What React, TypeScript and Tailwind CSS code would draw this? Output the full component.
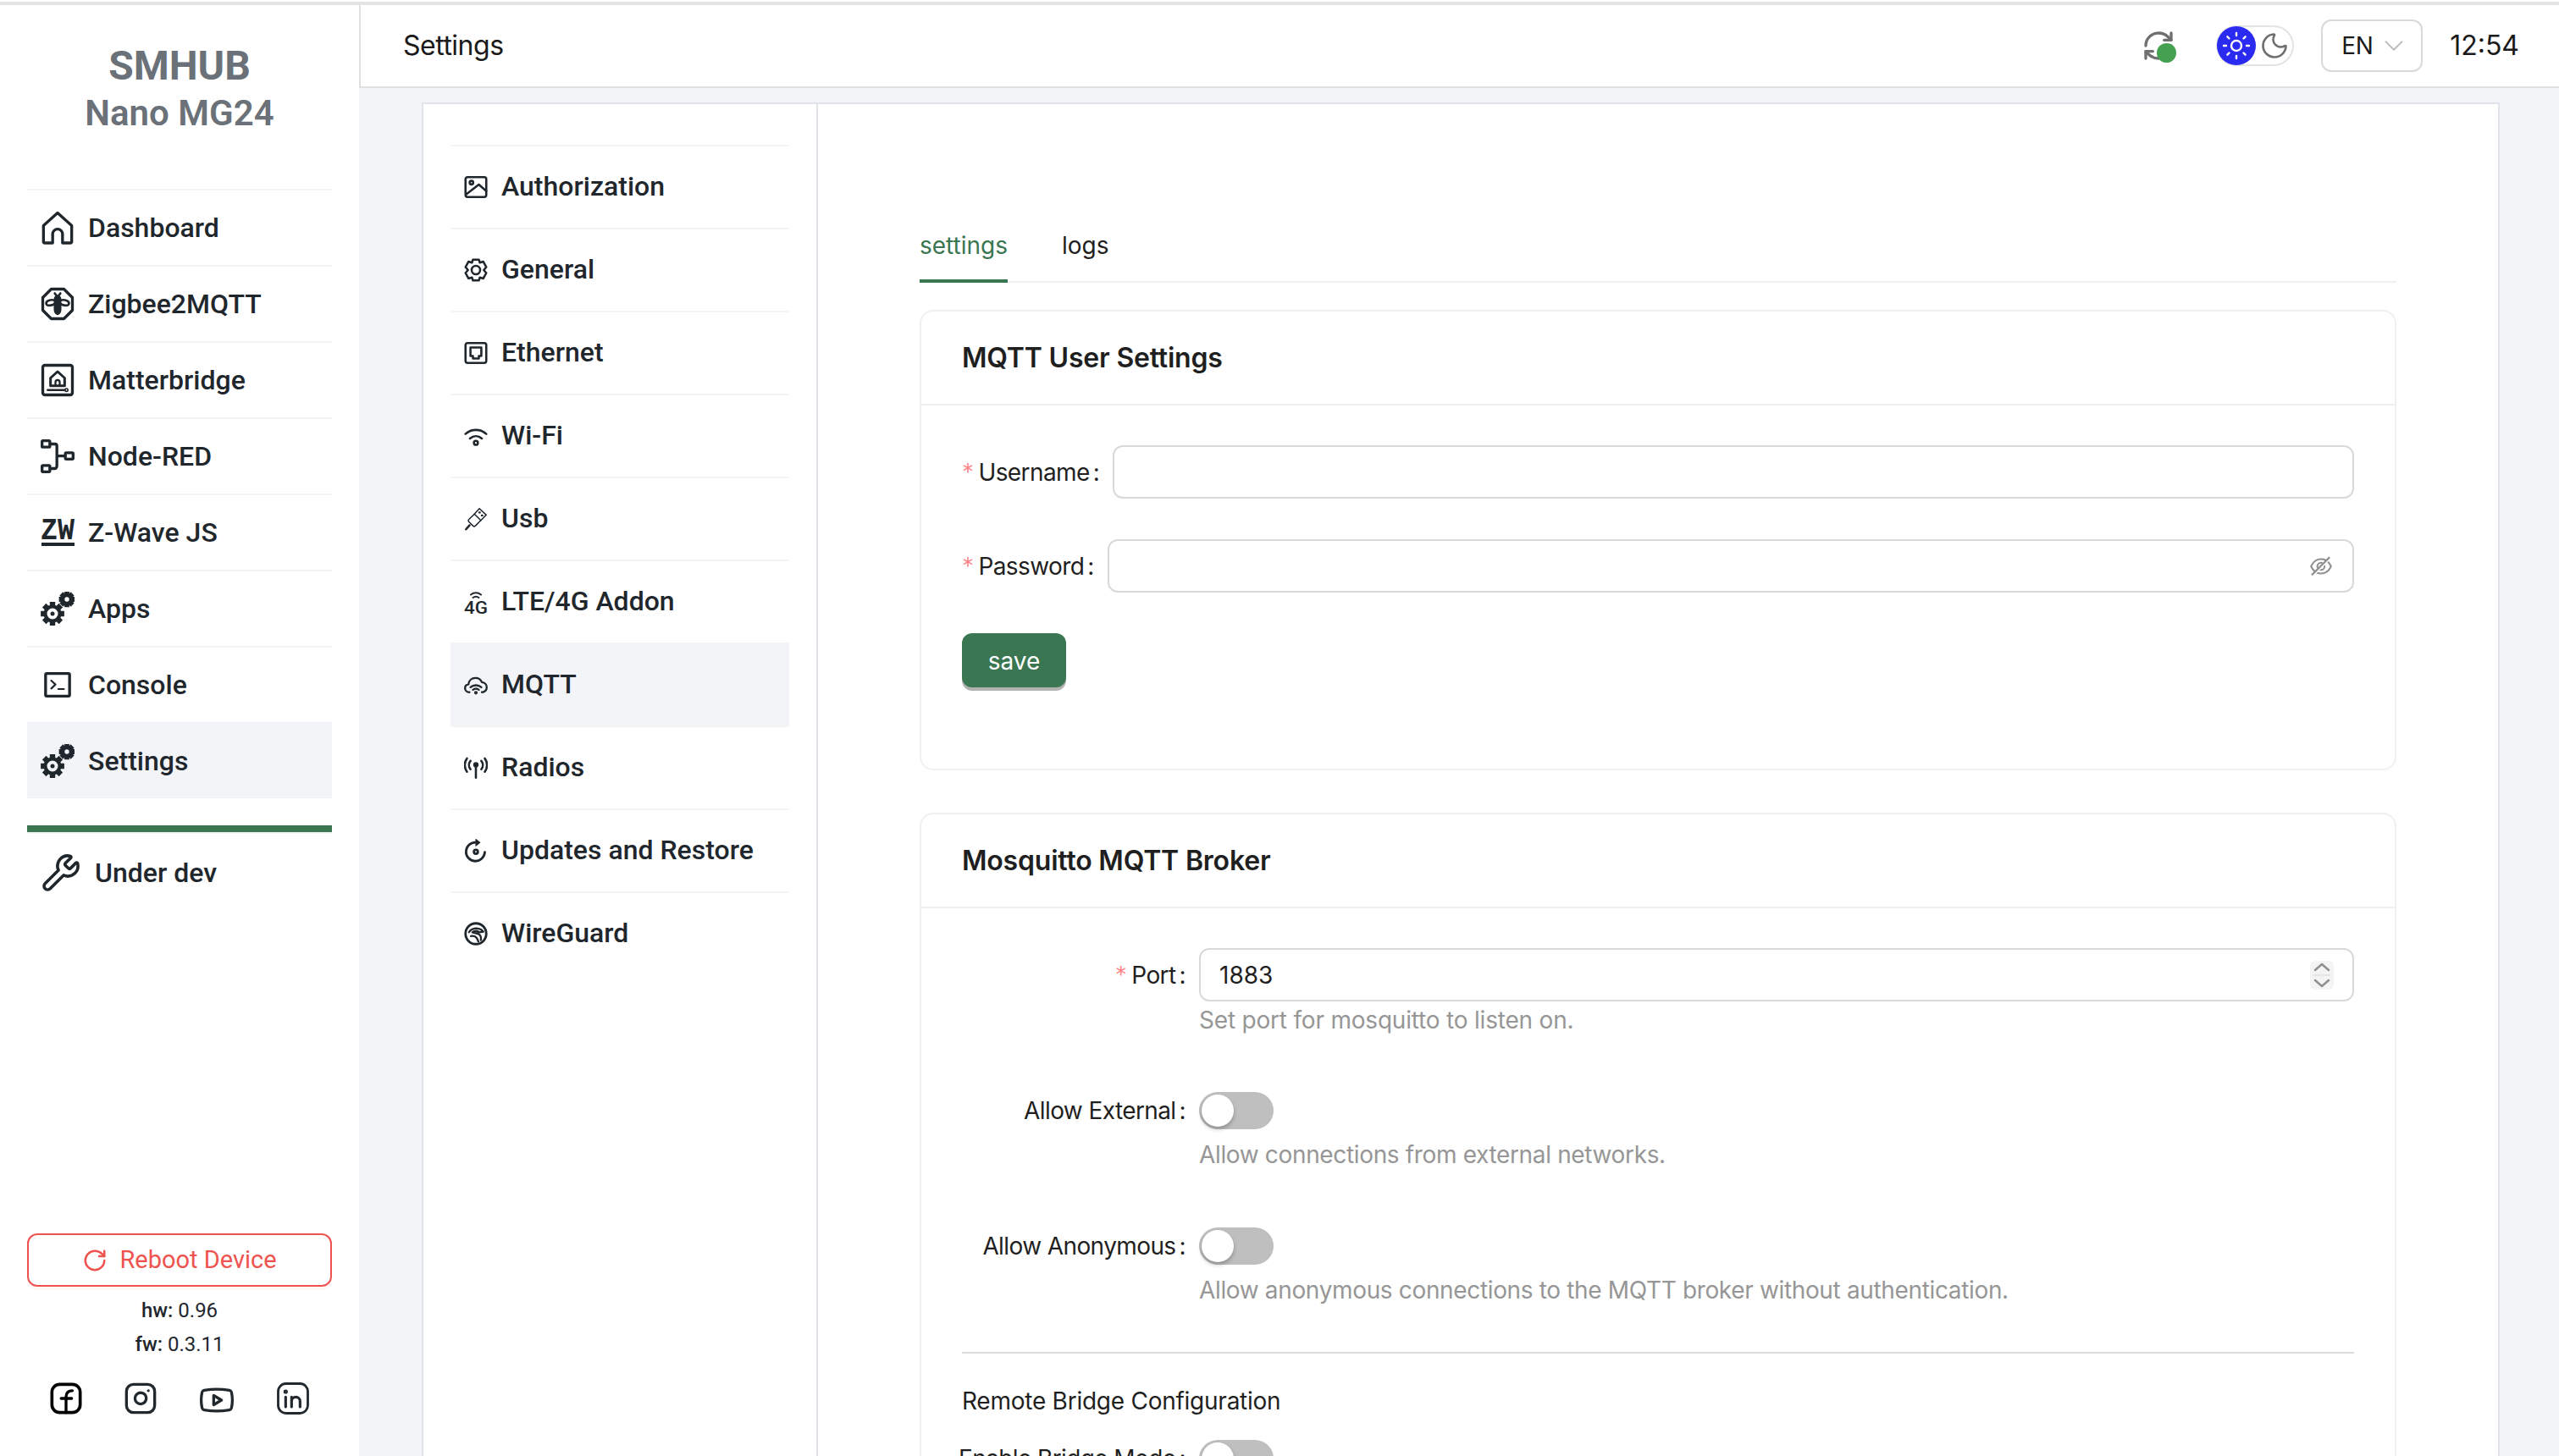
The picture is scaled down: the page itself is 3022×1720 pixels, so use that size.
import { ChevronDown, Instagram, Moon, RefreshCw, RotateCw, Sun, Wrench, Youtube } from 'lucide-react'
import { AiOutlineEyeInvisible } from 'react-icons/ai'
import type { ReactNode } from 'react'

const ROBOTO = 'font-[Roboto,sans-serif]'

type IconProps = { className?: string }

function Svg({ className, children, sw = 2 }: IconProps & { children: ReactNode; sw?: number }) {
  return (
    <svg viewBox="0 0 24 24" className={className} fill="none" stroke="currentColor" strokeWidth={sw} strokeLinecap="round" strokeLinejoin="round">
      {children}
    </svg>
  )
}

const HomeIcon = (p: IconProps) => (
  <Svg {...p}>
    <path d="M2 10.500 12 1.500l10 9V22a.8.8 0 0 1-.8.8h-5.700V16.500a3.500 3.500 0 0 0-7 0v6.300H2.800A.8.8 0 0 1 2 22Z" />
  </Svg>
)

const BeeIcon = (p: IconProps) => (
  <Svg {...p}>
    <path d="M7.500 1.500h9l6 6v9l-6 6h-9l-6-6v-9Z" />
    <path d="M12 6.500c-1.400 0-2.200 1-2.200 2.400v7.300c0 1.300 1 2.800 2.200 3.300 1.200-.5 2.200-2 2.200-3.300V8.900c0-1.400-.8-2.400-2.200-2.400Z" fill="currentColor" strokeWidth={1} />
    <path d="M10 9.500C7 8.500 3.500 10 4 12c.4 1.500 3.500 1.500 6 0M14 9.500c3-1 6.500.5 6 2.500-.4 1.500-3.500 1.500-6 0M10 4.500l1.500 2M14 4.500l-1.500 2" strokeWidth={1.600} />
  </Svg>
)

const MatterIcon = (p: IconProps) => (
  <Svg {...p}>
    <rect x="1.500" y="1.500" width="21" height="21" rx="1.500" />
    <path d="M7 10.500 12 6l5 4.500V16H7Z" strokeWidth={1.800} />
    <path d="M10.500 16v-2.500a1.500 1.500 0 0 1 3 0V16" strokeWidth={1.400} />
    <path d="M5 19h12" strokeWidth={1.500} />
    <circle cx="18.300" cy="19" r="1" strokeWidth={1} />
  </Svg>
)

const NodeRedIcon = (p: IconProps) => (
  <Svg {...p}>
    <rect x="1" y="1" width="5.500" height="4.500" rx=".6" />
    <rect x="1" y="18.500" width="5.500" height="4.500" rx=".6" />
    <rect x="17.500" y="9.500" width="5.500" height="4.500" rx=".6" />
    <path d="M6.500 3.300h3.700c.9 0 1.300.5 1.300 1.300v14c0 1-.5 2.100-1.300 2.100H6.500M11.500 11.800h6" strokeLinecap="butt" />
  </Svg>
)

const ZwIcon = ({ className }: IconProps) => (
  <svg viewBox="0 0 40 40" className={className} fill="currentColor" overflow="visible">
    <text x="0" y="28" fontFamily="Liberation Mono, monospace" fontWeight="700" fontSize="37" textLength="40" lengthAdjust="spacingAndGlyphs">ZW</text>
    <rect x="1" y="32" width="39" height="4" />
  </svg>
)

const Gear = ({ cx, cy, r, sw }: { cx: number; cy: number; r: number; sw: number }) => {
  const teeth = [0, 45, 90, 135, 180, 225, 270, 315]
  return (
    <g>
      <circle cx={cx} cy={cy} r={r} stroke="currentColor" strokeWidth={sw} fill="none" />
      {teeth.map(a => (
        <rect key={a} x={cx - sw * 0.8} y={cy - r - sw * 1.35} width={sw * 1.6} height={sw * 1.3} fill="currentColor" rx=".3" transform={`rotate(${a} ${cx} ${cy})`} />
      ))}
    </g>
  )
}

const GearsIcon = ({ className }: IconProps) => (
  <svg viewBox="0 0 40 40" className={className}>
    <Gear cx={14} cy={26} r={8.5} sw={4} />
    <circle cx={14} cy={26} r={2.5} fill="currentColor" />
    <Gear cx={31} cy={9} r={4.5} sw={3.6} />
  </svg>
)

const ConsoleIcon = (p: IconProps) => (
  <Svg {...p}>
    <rect x="3.500" y="4" width="17" height="16" rx=".8" />
    <path d="m7.500 9 3 2.800-3 2.800M12.500 15h4" strokeWidth={1.300} />
  </Svg>
)

const ImageIcon = (p: IconProps) => (
  <Svg {...p} sw={2.200}>
    <rect x="1.500" y="2" width="21" height="20" rx="2" />
    <circle cx="7.500" cy="7.500" r="1.800" />
    <path d="m2 19.500 13-10 7.500 6.500" />
  </Svg>
)

const CogOutlineIcon = (p: IconProps) => (
  <Svg {...p} sw={2.200}>
    <path d="M9 1.500h6l1 3 3.500-1 3 5.500-2.500 3 2.500 3-3 5.500-3.500-1-1 3H9l-1-3-3.500 1-3-5.500 2.500-3-2.500-3 3-5.500 3.500 1Z" />
    <circle cx="12" cy="12" r="4.300" />
  </Svg>
)

const EthernetIcon = (p: IconProps) => (
  <Svg {...p} sw={2.200}>
    <rect x="1.500" y="2" width="21" height="20" rx="2" />
    <path d="M6.500 6.500h11v8.500h-2.500v2.500H9V15H6.500Z" />
  </Svg>
)

const WifiIcon = (p: IconProps) => (
  <Svg {...p} sw={2.200}>
    <path d="M1.500 10C7.500 4.500 16.500 4.500 22.500 10M6 14.500c3.600-3 8.400-3 12 0" />
    <circle cx="12" cy="19" r="2" />
  </Svg>
)

const UsbIcon = (p: IconProps) => (
  <Svg {...p} sw={1.300}>
    <path d="M15.500 1.500 22.500 8 17 13.500 10.500 7Z" />
    <path d="M10.500 7 4.800 12.700c-.6.600-.6 1.500 0 2.100l4.400 4.400c.6.600 1.500.6 2.100 0L17 13.500" />
    <path d="m5.500 18.500-3.500 4" strokeWidth={2.200} />
    <path d="M15.500 5.500h.5M18 8.500h.5" strokeWidth={2} />
  </Svg>
)

const FourGIcon = ({ className }: IconProps) => (
  <svg viewBox="0 0 28 28" className={className} overflow="visible">
    <text x="0" y="28" fontFamily="Roboto, sans-serif" fontWeight="500" fontSize="21" fill="currentColor" textLength="28" lengthAdjust="spacingAndGlyphs">4G</text>
    <path d="M8 5.500c3.500-3 8.500-3 12 0M10.500 9c2-1.500 5-1.500 7 0" fill="none" stroke="currentColor" strokeWidth="2" strokeLinecap="round" />
  </svg>
)

const CloudWifiIcon = (p: IconProps) => (
  <Svg {...p}>
    <path d="M5.500 19.500C3 19.500 1 17.700 1 15.400c0-2 1.500-3.700 3.500-4C5 7.500 8 5 11.500 5c3 0 5.500 1.700 6.500 4.300 2.800.3 5 2.600 5 5.300 0 2.700-2.200 4.900-5 4.900" />
    <path d="M6.500 14.500c3-2.800 8-2.800 11 0M9 17c1.700-1.300 4.300-1.300 6 0" />
    <circle cx="12" cy="20" r=".8" />
  </Svg>
)

const AntennaIcon = (p: IconProps) => (
  <Svg {...p} sw={2.200}>
    <path d="M12 11v11" />
    <circle cx="12" cy="9" r="1.600" fill="currentColor" />
    <path d="M6.500 5c-2 2.500-2 6 0 8.500M17.500 5c2 2.500 2 6 0 8.500M3 2.500c-3 4-3 9.500 0 13.500M21 2.500c3 4 3 9.500 0 13.500" />
  </Svg>
)

const UpdateIcon = (p: IconProps) => (
  <Svg {...p} sw={2.400}>
    <path d="M11.500 3.500a9.500 9.500 0 1 0 9.500 10" />
    <path d="M12 .5v6.500l4-3.300Z" fill="currentColor" strokeWidth={1} />
    <circle cx="12" cy="13" r="2" />
  </Svg>
)

const WireguardIcon = (p: IconProps) => (
  <Svg {...p} sw={2.400}>
    <circle cx="12" cy="12" r="10.500" />
    <path d="M5 10.500C7.500 6.500 13 5.500 17.500 8l2 2-4 .5c-2-1.500-5-1.500-7 0l5.500 1.500c2.500 1 3.500 3.500 3 6.500" strokeWidth={2} />
    <path d="M7 14.500c2-.5 4.500 0 6 2l1.500 3.500" strokeWidth={2} />
  </Svg>
)

const FacebookIcon = (p: IconProps) => (
  <Svg {...p} sw={2.200}>
    <rect x="2" y="2" width="20" height="20" rx="5.500" />
    <path d="M12 22V11c0-3 1.300-4.500 4.500-4.500M8.500 12h7.500" strokeWidth={2} />
  </Svg>
)

const LinkedinIcon = (p: IconProps) => (
  <Svg {...p} sw={1.700}>
    <rect x="1.500" y="1.500" width="21" height="21" rx="5.500" />
    <path d="M6.800 11v7M11 18v-7M11 14c0-2 1.500-3 3-3s3 1 3 3v4" strokeWidth={1.900} />
    <circle cx="6.800" cy="7.200" r=".7" />
  </Svg>
)

const SpinnerIcon = ({ className }: IconProps) => (
  <svg viewBox="0 0 28 34" className={className} fill="none" stroke="currentColor" strokeLinecap="round" strokeLinejoin="round">
    <path d="m6 11 8-7 8 7M6 23l8 7 8-7" strokeWidth="2.500" />
    <path d="M4 17h20" stroke="#e0e0e0" strokeWidth="1.500" />
  </svg>
)

const SIDE_ITEMS = [
  { label: 'Dashboard', icon: HomeIcon },
  { label: 'Zigbee2MQTT', icon: BeeIcon },
  { label: 'Matterbridge', icon: MatterIcon },
  { label: 'Node-RED', icon: NodeRedIcon },
  { label: 'Z-Wave JS', icon: ZwIcon },
  { label: 'Apps', icon: GearsIcon },
  { label: 'Console', icon: ConsoleIcon },
  { label: 'Settings', icon: GearsIcon, active: true },
]

const SETTINGS_ITEMS = [
  { label: 'Authorization', icon: ImageIcon },
  { label: 'General', icon: CogOutlineIcon },
  { label: 'Ethernet', icon: EthernetIcon },
  { label: 'Wi-Fi', icon: WifiIcon },
  { label: 'Usb', icon: UsbIcon },
  { label: 'LTE/4G Addon', icon: FourGIcon },
  { label: 'MQTT', icon: CloudWifiIcon, active: true },
  { label: 'Radios', icon: AntennaIcon },
  { label: 'Updates and Restore', icon: UpdateIcon },
  { label: 'WireGuard', icon: WireguardIcon },
]

function Sidebar() {
  return (
    <aside className="flex h-full w-[424px] shrink-0 flex-col bg-white px-8">
      <div className={`${ROBOTO} h-[217px] pt-[48px] text-center text-[#6b7178]`}>
        <div className="text-[48px] font-bold leading-[48px]">SMHUB</div>
        <div className="mt-[8px] text-[42px] font-semibold leading-[48px]">Nano MG24</div>
      </div>

      <nav className={`${ROBOTO} text-[32px] font-medium text-[#1f272d]`}>
        {SIDE_ITEMS.map(item => (
          <div key={item.label} className={`flex h-[90px] items-center gap-[16px] border-t-2 pl-4 ${item.active ? 'border-transparent bg-[#f2f4f8]' : 'border-[#f3f4f6]'}`}>
            <item.icon className="h-[40px] w-[40px] shrink-0" />
            <span>{item.label}</span>
          </div>
        ))}
      </nav>

      <div className="mt-[32px] h-[8px] bg-[#3a7651]" />
      <div className={`${ROBOTO} flex h-[94px] items-center gap-[16px] border-t-2 border-[#f3f4f6] pl-4 text-[32px] font-medium text-[#1f272d]`}>
        <Wrench className="h-[48px] w-[48px]" strokeWidth={1.800} />
        <span>Under dev</span>
      </div>

      <div className="mt-auto pb-[44px]">
        <button type="button" className={`${ROBOTO} flex h-[63px] w-full items-center justify-center gap-[14px] rounded-[12px] border-2 border-[#ef5350] text-[29px] text-[#ef5350] shadow-[0_4px_0_rgba(239,83,80,0.06)]`}>
          <RotateCw className="h-[30px] w-[30px]" strokeWidth={2} />
          Reboot Device
        </button>
        <div className={`${ROBOTO} mt-[8px] text-center text-[24px] leading-[40px] text-[#1f272d]`}>
          <div><span className="font-medium">hw:</span> 0.96</div>
          <div><span className="font-medium">fw:</span> 0.3.11</div>
        </div>
        <div className="mt-[24px] flex justify-around px-[2px] text-[#22292e]">
          <FacebookIcon className="h-[40px] w-[40px] text-black" />
          <Instagram className="h-[40px] w-[40px]" strokeWidth={2} />
          <Youtube className="h-[44px] w-[44px]" strokeWidth={1.800} />
          <LinkedinIcon className="h-[40px] w-[40px]" />
        </div>
      </div>
    </aside>
  )
}

function Header() {
  return (
    <header className="flex h-[98px] shrink-0 items-center border-b-2 border-l-2 border-[#e0e0e0] bg-white pl-[50px] pr-[47px] font-[Inter,sans-serif] text-[#1a1a1a]">
      <span className="text-[32px] leading-none tracking-[-0.5px]">Settings</span>
      <div className="ml-auto flex items-center">
        <div className="relative mr-[48px] h-[40px] w-[40px] text-[#6f6f6f]">
          <RefreshCw className="h-[40px] w-[40px]" strokeWidth={2} />
          <span className="absolute left-[18px] top-[17px] h-[23px] w-[23px] rounded-full bg-[#46a051]" />
        </div>
        <div className="mr-[32px] flex h-[48px] w-[92px] items-center rounded-full border-2 border-[#e4e4e4]">
          <span className="-ml-[1px] flex h-[46px] w-[46px] items-center justify-center rounded-full bg-[#2a2af0] text-white">
            <Sun className="h-[36px] w-[36px]" strokeWidth={1.600} />
          </span>
          <Moon className="ml-[4px] h-[36px] w-[36px] text-[#6f6f6f]" strokeWidth={1.800} />
        </div>
        <div className="mr-[32px] flex h-[62px] w-[120px] items-center gap-[6px] rounded-[12px] border-2 border-[#d9d9d9] pl-[22px] text-[28px] tracking-[-0.3px]">
          EN
          <ChevronDown className="h-[38px] w-[38px] text-[#bdbdbd]" strokeWidth={1.200} />
        </div>
        <span className="text-[32px] leading-none">12:54</span>
      </div>
    </header>
  )
}

function SettingsNav() {
  return (
    <nav className={`${ROBOTO} h-full w-[466px] shrink-0 border-r-2 border-[#e0e3ea] pl-[32px] pr-[32px] pt-[48px] text-[32px] font-medium text-[#1f272d]`}>
      {SETTINGS_ITEMS.map(item => (
        <div key={item.label} className={`flex h-[98px] items-center gap-[16px] border-t-2 pl-4 ${item.active ? 'border-transparent bg-[#f2f4f8]' : 'border-[#f3f4f6]'}`}>
          <item.icon className="h-[28px] w-[28px] shrink-0" />
          <span className="-translate-y-[1px]">{item.label}</span>
        </div>
      ))}
    </nav>
  )
}

function Label({ text, required }: { text: string; required?: boolean }) {
  return (
    <label className="flex items-center whitespace-nowrap text-[28px] leading-none tracking-[-0.6px] text-[#1f1f1f]">
      {required && <span className="mr-[6px] text-[28px] font-light text-[#ff8080]">*</span>}
      {text}
      <span className="ml-[4px] mr-[16px]">:</span>
    </label>
  )
}

function Card({ title, children, className }: { title: string; children: ReactNode; className?: string }) {
  return (
    <section className={`rounded-[16px] border-2 border-[#f0f0f0] ${className ?? ''}`}>
      <h3 className="flex h-[111px] items-center border-b-2 border-[#f0f0f0] px-[48px] text-[32px] font-semibold tracking-[-0.2px] text-[#1f1f1f]">{title}</h3>
      <div className="px-[48px] pt-[47px]">{children}</div>
    </section>
  )
}

function Switch() {
  return (
    <span className="flex h-[44px] w-[88px] items-center rounded-full bg-[#bfbfbf] pl-[3px]">
      <span className="h-[38px] w-[38px] rounded-full bg-white shadow-[0_3px_5px_rgba(0,0,0,0.25)]" />
    </span>
  )
}

function Row({ label, help }: { label: string; help: string }) {
  return (
    <div className="flex">
      <div className="flex h-[44px] w-[280px] shrink-0 items-center justify-end">
        <Label text={label} />
      </div>
      <div className="flex-1">
        <Switch />
        <p className="mt-[16px] text-[28px] leading-[28px] tracking-[-0.35px] text-[#969696]">{help}</p>
      </div>
    </div>
  )
}

function MainContent() {
  return (
    <div className="h-full flex-1 overflow-hidden pl-[120px] pr-[120px] pt-[147px] font-[Inter,sans-serif]">
      <div className="flex gap-[64px] border-b-2 border-[#f0f0f0] text-[28px]">
        <span className="-mb-[2px] border-b-4 border-[#3a7651] pb-[20px] leading-[40px] text-[#3a7651]">settings</span>
        <span className="pb-[20px] leading-[40px] text-[#1f1f1f]">logs</span>
      </div>

      <Card title="MQTT User Settings" className="mt-[32px] h-[544px]">
        <div className="flex items-center">
          <Label text="Username" required />
          <div className="h-[63px] flex-1 rounded-[12px] border-2 border-[#d9d9d9]" />
        </div>
        <div className="mt-[48px] flex items-center">
          <Label text="Password" required />
          <div className="flex h-[63px] flex-1 items-center justify-end rounded-[12px] border-2 border-[#d9d9d9] pr-[22px]">
            <AiOutlineEyeInvisible className="h-[30px] w-[30px] text-[#8f8f8f]" />
          </div>
        </div>
        <button type="button" className="mt-[48px] block h-[64px] w-[123px] rounded-[12px] bg-[#3a7651] pt-[2px] text-[28px] text-white shadow-[0_4px_0_rgba(0,0,0,0.3)]">save</button>
      </Card>

      <Card title="Mosquitto MQTT Broker" className="mt-[50px]">
        <div className="flex">
          <div className="flex h-[63px] w-[280px] shrink-0 items-center justify-end">
            <Label text="Port" required />
          </div>
          <div className="flex-1">
            <div className="flex h-[63px] items-center justify-between rounded-[12px] border-2 border-[#d9d9d9] pl-[22px] pr-[22px] text-[28px] text-[#1f1f1f]">
              1883
              <span className="flex h-[34px] w-[28px] items-center justify-center rounded-[6px] bg-[#f4f4f4] text-[#8f8f8f]">
                <SpinnerIcon className="h-[34px] w-[28px]" />
              </span>
            </div>
            <p className="mt-[8px] text-[28px] leading-[28px] tracking-[-0.2px] text-[#969696]">Set port for mosquitto to listen on.</p>
          </div>
        </div>

        <div className="mt-[71px]">
          <Row label="Allow External" help="Allow connections from external networks." />
        </div>
        <div className="mt-[72px]">
          <Row label="Allow Anonymous" help="Allow anonymous connections to the MQTT broker without authentication." />
        </div>

        <div className="mt-[59px] border-t-2 border-[#dcdcdc] pt-[40px] text-[28px] leading-[32px] tracking-[-0.25px] text-[#1f1f1f]">Remote Bridge Configuration</div>
        <div className="mt-[30px]">
          <Row label="Enable Bridge Mode" help="" />
        </div>
      </Card>
    </div>
  )
}

export default function App() {
  return (
    <div className="mt-[2px] flex h-[1718px] flex-col overflow-hidden border-t-4 border-[#e4e4e4] bg-[#f2f4f8]">
      <div className="flex h-full">
        <Sidebar />
        <div className="flex h-full flex-1 flex-col">
          <Header />
          <main className="ml-[74px] mr-[70px] mt-[17px] flex flex-1 overflow-hidden border-x-2 border-t-2 border-[#e0e3ea] bg-white">
            <SettingsNav />
            <MainContent />
          </main>
        </div>
      </div>
    </div>
  )
}
